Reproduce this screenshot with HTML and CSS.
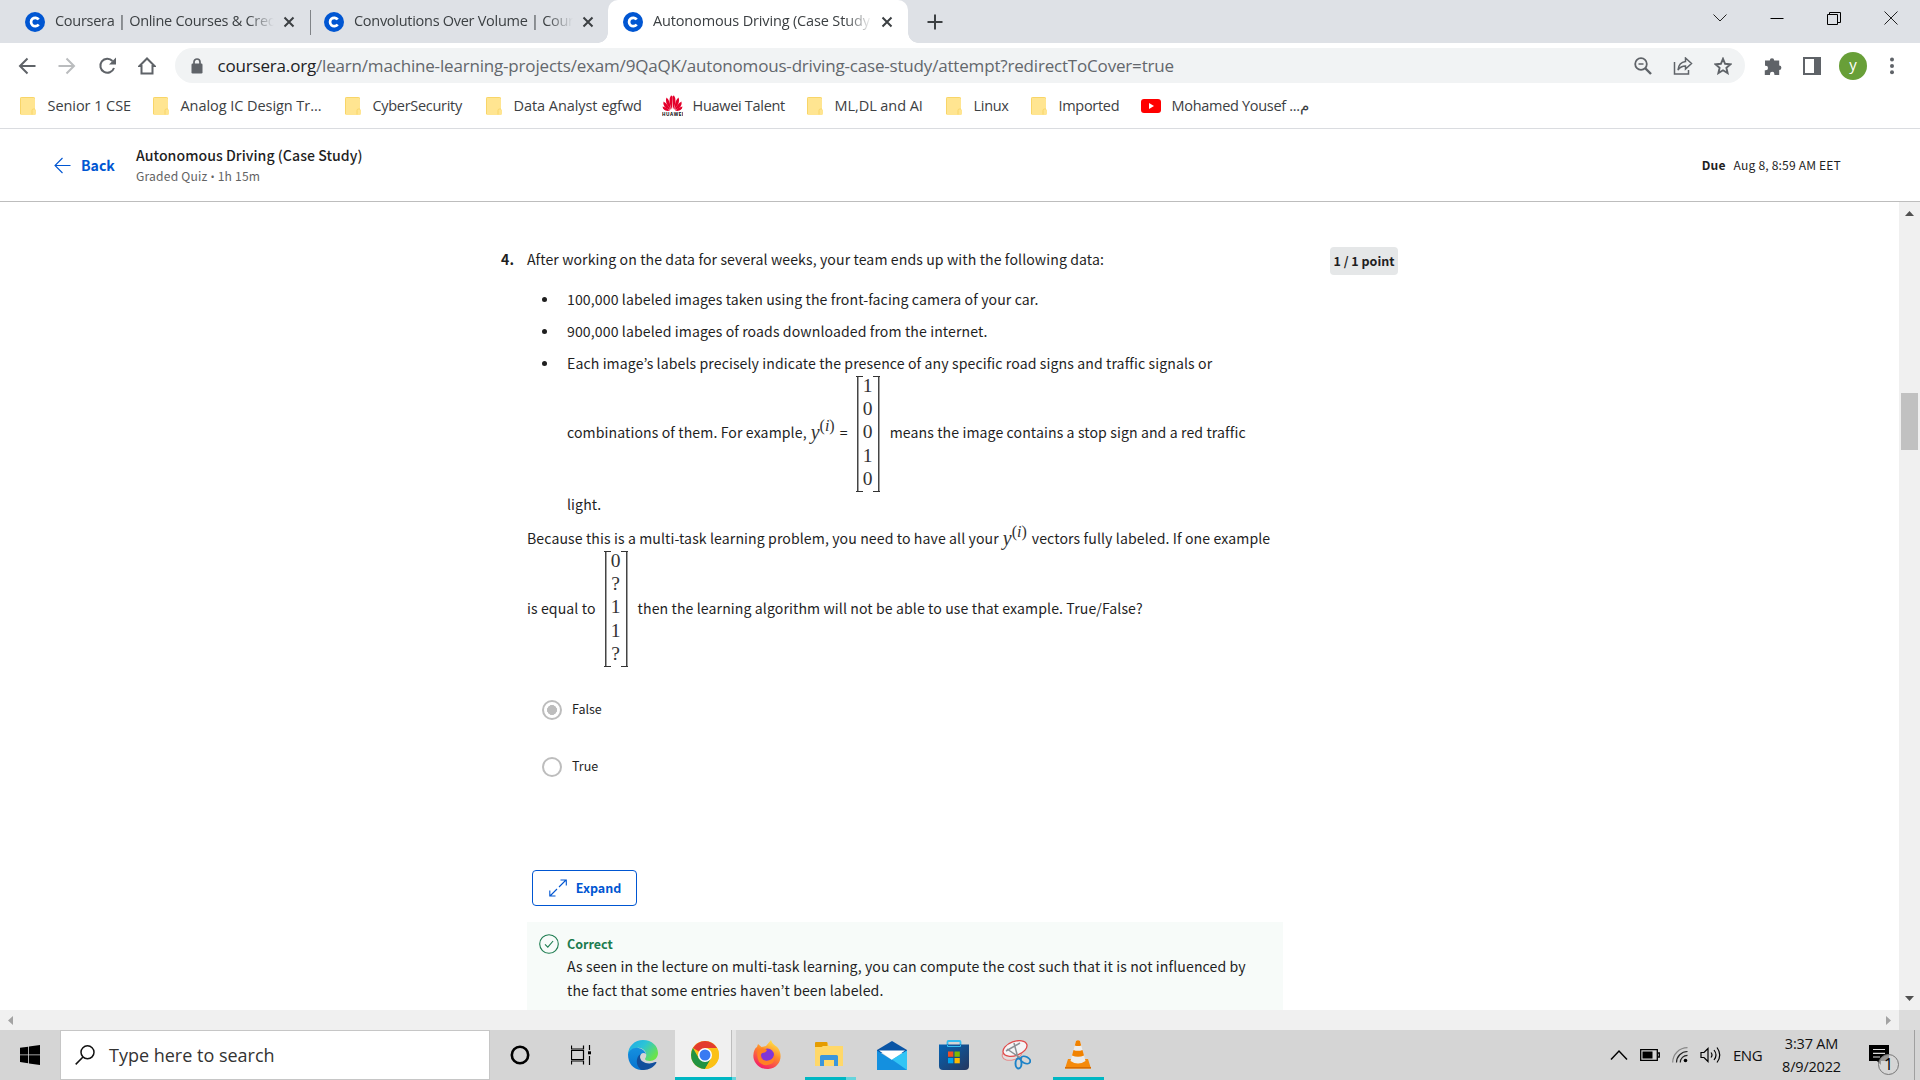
FILE: index.html
```html
<!DOCTYPE html>
<html lang="en">
<head>
<meta charset="utf-8">
<title>Autonomous Driving (Case Study)</title>
<link rel="stylesheet" href="styles.css">
</head>
<body>
<svg width="0" height="0" class="defs">
  <symbol id="c-logo" viewBox="0 0 20 20"><circle cx="10" cy="10" r="10" fill="#0056d2"/><path d="M13.7 7.6A4.2 4.2 0 1 0 13.7 12.4" fill="none" stroke="#fff" stroke-width="2.7"/></symbol>
  <symbol id="x" viewBox="0 0 12 12"><path d="M1.5 1.5l9 9M10.5 1.5l-9 9" stroke="#3c4043" stroke-width="2"/></symbol>
  <symbol id="folder" viewBox="0 0 16 18"><path d="M1.5 0h12Q15 0 15 1.500V12l1 1v3.500Q16 18 14.500 18h-13Q0 18 0 16.500v-15Q0 0 1.500 0z" fill="#ffe591"/><path d="M.5 17V1.500Q.5.5 1.500.5h12q1 0 1 1M12 17.500v-4q0-1.500 1.500-1.500h1.500" fill="none" stroke="#f8d568"/></symbol>
</svg>
<div class="tabs">
  <div class="tab"><svg class="fav"><use href="#c-logo"/></svg><span class="tab-title">Coursera | Online Courses &amp; Cred</span><svg class="tab-x"><use href="#x"/></svg></div>
  <div class="tab second"><svg class="fav"><use href="#c-logo"/></svg><span class="tab-title">Convolutions Over Volume | Cour</span><svg class="tab-x"><use href="#x"/></svg></div>
  <div class="tab active"><svg class="fav"><use href="#c-logo"/></svg><span class="tab-title t3">Autonomous Driving (Case Study</span><svg class="tab-x"><use href="#x"/></svg></div>
  <svg class="plus" width="16" height="16"><path d="M8 .5v15M.5 8h15" stroke="#3c4043" stroke-width="2"/></svg>
  <div class="window-buttons">
    <svg width="14" height="14"><path d="M.5 3.500L7 10l6.500-6.500" fill="none" stroke="#222"/></svg>
    <svg width="14" height="14"><path d="M.5 7.500h13" stroke="#000"/></svg>
    <svg width="14" height="14"><path d="M.5 3.500h10v10H.5zM2.500 3V1.500h11v10H11" fill="none" stroke="#000"/></svg>
    <svg width="14" height="14"><path d="M.5.5l13 13M13.500.5l-13 13" stroke="#222"/></svg>
  </div>
</div>
<div class="toolbar">
  <div class="nav">
    <svg width="18" height="18"><path d="M17.500 9H2M9.500 1.500L2 9l7.500 7.500" fill="none" stroke="#5f6368" stroke-width="2"/></svg>
    <svg width="18" height="18"><path d="M.5 9H16M8.500 1.500L16 9l-7.500 7.500" fill="none" stroke="#babcbe" stroke-width="2"/></svg>
    <svg width="18" height="18"><path d="M16 11A7 7 0 1 1 14.500 4" fill="none" stroke="#5f6368" stroke-width="2"/><path d="M18 .5v7h-7z" fill="#5f6368"/></svg>
    <svg width="18" height="18"><path d="M3.500 16.500V9H1.500L9 1.500 16.500 9H14.500v7.500z" fill="none" stroke="#5f6368" stroke-width="2"/></svg>
  </div>
  <div class="omnibox">
    <svg width="12" height="16"><path d="M3 7V4a3 3 0 0 1 6 0v3" fill="none" stroke="#5f6368" stroke-width="1.700"/><rect x=".5" y="5.500" width="11" height="10" rx="1.200" fill="#5f6368"/></svg>
    <div class="url"><b>coursera.org</b>/learn/machine-learning-projects/exam/9QaQK/autonomous-driving-case-study/attempt?redirectToCover=true</div>
    <div class="omni-icons">
      <svg width="18" height="18"><circle cx="7" cy="7" r="5.800" fill="none" stroke="#5f6368" stroke-width="1.800"/><path d="M11 11l6 6" stroke="#5f6368" stroke-width="2.400"/><path d="M4.500 7h5" stroke="#5f6368" stroke-width="1.500"/></svg>
      <svg width="20" height="18"><path d="M1.500 5v12h14v-4" fill="none" stroke="#5f6368" stroke-width="1.500"/><path d="M12.500 1l6 5.500-6 5.500V9C9 9 7 10 5 13c.5-5 3.500-8 7.500-8.500z" fill="none" stroke="#5f6368" stroke-width="1.500"/></svg>
      <svg width="18" height="18"><path d="M9 1.800l2.100 5 5.400.5-4.100 3.500 1.200 5.300L9 13.300l-4.600 2.800 1.200-5.300L1.500 7.300l5.400-.5z" fill="none" stroke="#5f6368" stroke-width="1.900"/></svg>
    </div>
  </div>
  <div class="ext">
    <svg width="18" height="18"><path d="M1 3.500h4.800a2.200 2.200 0 0 1 4.400 0h5v5a2.200 2.200 0 0 1 0 4.400V18h-4.800v-1a2.200 2.200 0 0 0-4.400 0v1H.8v-4.800h1a2.200 2.200 0 0 0 0-4.400H1z" fill="#5f6368"/></svg>
    <svg width="18" height="18"><path d="M1 1h16v16H1z" fill="none" stroke="#5f6368" stroke-width="2"/><path d="M11 1h6v16h-6z" fill="#5f6368"/></svg>
    <div class="avatar">y</div>
    <svg width="18" height="18"><g fill="#5f6368"><circle cx="9" cy="2.500" r="2"/><circle cx="9" cy="9" r="2"/><circle cx="9" cy="15.200" r="2"/></g></svg>
  </div>
</div>
<div class="bookmarks">
  <div class="bm wide b1"><svg><use href="#folder"/></svg><span>Senior 1 CSE</span></div>
  <div class="bm wide b2"><svg><use href="#folder"/></svg><span>Analog IC Design Tr...</span></div>
  <div class="bm b3"><svg><use href="#folder"/></svg><span>CyberSecurity</span></div>
  <div class="bm wide b4"><svg><use href="#folder"/></svg><span>Data Analyst egfwd</span></div>
  <div class="bm b5"><svg class="huawei" viewBox="0 0 21 21"><g fill="#e4002b"><path d="M10 14.500Q5.500 5 9 .5q1.800 0 1.500 3z"/><path d="M11 14.500Q15.500 5 12 .5q-1.800 0-1.500 3z"/><path d="M9 14.500Q2 8 4.500 2.500 8 5 9 14.500z"/><path d="M12 14.500q7-6.500 4.500-12Q13 5 12 14.500z"/><path d="M8.500 15Q0 12.500 1.500 6.500 6 9 8.500 15z"/><path d="M12.500 15Q21 12.500 19.500 6.500 15 9 12.500 15z"/><path d="M8 15.600Q1.500 17 .5 11.500q4 .5 7.500 4.100z"/><path d="M13 15.600q6.500 1.400 7.500-4.100-4 .5-7.500 4.100z"/></g><text x="0" y="20.800" font-size="4.600" textLength="21" font-weight="bold">HUAWEI</text></svg><span>Huawei Talent</span></div>
  <div class="bm wide b6"><svg><use href="#folder"/></svg><span>ML,DL and AI</span></div>
  <div class="bm b7"><svg><use href="#folder"/></svg><span>Linux</span></div>
  <div class="bm b8"><svg><use href="#folder"/></svg><span>Imported</span></div>
  <div class="bm b9"><svg class="yt" viewBox="0 0 20 14"><rect width="20" height="14" rx="3" fill="#f00"/><path d="M8 4l5 3-5 3z" fill="#fff"/></svg><span>Mohamed Yousef ...م</span></div>
</div>
<header class="quiz-head">
  <svg width="17" height="17"><path d="M16.500 8.500H1M8.500 1L1 8.500 8.500 16" fill="none" stroke="#0056d2" stroke-width="1.100"/></svg>
  <a class="back">Back</a>
  <div class="heading"><h1>Autonomous Driving (Case Study)</h1><p>Graded Quiz <span class="dot">•</span> 1h 15m</p></div>
  <div class="due"><b>Due</b><span>Aug 8, 8:59 AM EET</span></div>
</header>
<div class="viewport">
  <main class="question">
    <div class="num">4.</div>
    <div class="body">
      <p class="line intro">After working on the data for several weeks, your team ends up with the following data:</p>
      <ul>
        <li>100,000 labeled images taken using the front-facing camera of your car.</li>
        <li>900,000 labeled images of roads downloaded from the internet.</li>
        <li>Each image’s labels precisely indicate the presence of any specific road signs and traffic signals or
          <div class="mathline"><span class="m1">combinations of them. For example,</span><span class="y">y<sup>(<i>i</i>)</sup></span><span class="eq">=</span><span class="matrix"><i>1</i><i>0</i><i>0</i><i>1</i><i>0</i></span><span class="m2">means the image contains a stop sign and a red traffic</span></div>
          <div>light.</div></li>
      </ul>
      <div class="because"><span class="m3">Because this is a multi-task learning problem, you need to have all your</span><span class="y">y<sup>(<i>i</i>)</sup></span><span class="m4">vectors fully labeled. If one example</span></div>
      <div class="mathline second-math"><span class="m5">is equal to</span><span class="matrix"><i>0</i><i>?</i><i>1</i><i>1</i><i>?</i></span><span class="m6">then the learning algorithm will not be able to use that example. True/False?</span></div>
      <div class="option"><span class="radio on"></span><span class="label">False</span></div>
      <div class="option"><span class="radio"></span><span class="label">True</span></div>
      <button class="expand"><svg width="18" height="18"><path d="M10 8L17 1M11.500 1H17.300V6.500M8 10L1 17M6.500 17H.8v-5.500" fill="none" stroke="#0056d2" stroke-width="1.100"/></svg><span class="label">Expand</span></button>
      <div class="feedback">
        <svg width="20" height="20"><circle cx="10" cy="10" r="9.300" fill="none" stroke="#1d7c50" stroke-width="1.100"/><path d="M6 10.300l2.800 2.800 5.300-6.100" fill="none" stroke="#1d7c50" stroke-width="1.100"/></svg>
        <div><h2>Correct</h2><p>As seen in the lecture on multi-task learning, you can compute the cost such that it is not influenced by<br>the fact that some entries haven’t been labeled.</p></div>
      </div>
    </div>
    <div class="points">1 / 1 point</div>
  </main>
  <div class="vbar"><svg width="9" height="5"><path d="M0 5L4.500 0 9 5z" fill="#505050"/></svg><span class="thumb"></span><svg class="down" width="9" height="5"><path d="M0 0h9L4.500 5z" fill="#505050"/></svg></div>
</div>
<div class="hbar"><svg width="5" height="9"><path d="M5 0v9L0 4.500z" fill="#a3a3a3"/></svg><svg class="right" width="5" height="9"><path d="M0 0v9l5-4.500z" fill="#a3a3a3"/></svg><span class="corner"></span></div>
<footer class="taskbar">
  <div class="start"><svg width="20" height="20"><path d="M0 2.800l8.200-1.100v7.800H0zM9 1.500L20 0v9.500H9zM0 10.300h8.200v7.900L0 17zM9 10.300h11V20L9 18.400z"/></svg></div>
  <div class="search"><svg width="20" height="20"><circle cx="12.500" cy="7.300" r="6.500" fill="none" stroke="#111" stroke-width="1.500"/><path d="M8 12L.7 19.400" stroke="#111" stroke-width="1.500"/></svg>Type here to search</div>
  <div class="cell"><svg width="20" height="20"><circle cx="10" cy="10" r="8.200" fill="none" stroke="#000" stroke-width="2.600"/></svg></div>
  <div class="cell"><svg width="20" height="20"><path d="M.5.500v3.500h12V.5M.5 5.500h12v9H.5zM.5 19.500V16h12v3.500M18.500 0v5M18.500 11v9" fill="none" stroke="#000" stroke-width="1.200"/><path d="M17 6.300h3v3h-3z"/></svg></div>
  <div class="cell"><svg width="32" height="32" viewBox="0 0 32 32">
    <defs><linearGradient id="e1" x1="0" y1="0" x2="1" y2=".6"><stop offset="0" stop-color="#1fa8e8"/><stop offset=".5" stop-color="#2cc4d6"/><stop offset="1" stop-color="#6be34a"/></linearGradient><linearGradient id="e2" x1="0" y1="0" x2="0" y2="1"><stop offset="0" stop-color="#1690df"/><stop offset="1" stop-color="#0674d0"/></linearGradient></defs>
    <path d="M1 16C1 7 8 1 16 1c9 0 15 6 15 13 0 5-4 8-8 8-3 0-5-1-5-2 0-.8 1.300-1.500 1.300-4C19 11 14 8 10 9 5 10 2 13 1 16z" fill="url(#e1)"/>
    <path d="M1 15.500C2 11 7 8 11.500 9c4 .8 6.500 3 7.500 6-2-2-6-1-6 3 0 7 6 11 12 8-3 4-8 5-11 4.900C6 30.500 1 24 1 15.500z" fill="url(#e2)"/>
    <path d="M13.500 15C9 18 8 26 14 30.800c7 1 12.500-2.300 15.300-6.800.5-1-.2-1.300-1-.9C21 26.500 13 23 13 18c0-1 .2-2 .5-3z" fill="#124f9c"/></svg></div>
  <div class="cell chrome"><svg width="28" height="28" viewBox="0 0 28 28"><circle cx="14" cy="14" r="14" fill="#fbc116"/><path d="M14 14L1.900 7A14 14 0 0 1 26.100 7z" fill="#e33b2e"/><path d="M1.900 7A14 14 0 0 0 14 28l6-10.500-6-3.500-6 3.500z" fill="#229342"/><path d="M14 7h12.100A14 14 0 0 1 14 28l6.100-10.500z" fill="#fbc116"/><circle cx="14" cy="14" r="7" fill="#fff"/><circle cx="14" cy="14" r="5.500" fill="#397af2"/></svg></div>
  <div class="cell"><svg width="30" height="30" viewBox="0 0 30 30">
    <defs><linearGradient id="f1" x1=".8" y1="0" x2=".3" y2="1"><stop offset="0" stop-color="#fff04a"/><stop offset=".45" stop-color="#ff8a2b"/><stop offset="1" stop-color="#f3196b"/></linearGradient></defs>
    <path d="M5 7l1-3 3.500 3L14 6l5-6c1 4 4 5 6 7l1 1c6 9 1 20-9.500 21C6 29.500.8 21 1.400 15 1.600 11 3 8 5 7z" fill="url(#f1)"/><circle cx="15.500" cy="15" r="6.500" fill="#8136d8"/><path d="M6 9q6-2 9 1-1 3-5 3-2 2-1 5 3 4 9 2 4-2 4-6 2 7-3 10-7 3-12-2Q4 16 6 9z" fill="#ff8124"/></svg></div>
  <div class="cell explorer"><svg width="28" height="26" viewBox="0 0 28 26"><path d="M0 3V1.500Q0 1 1 1h11l2 3H28v20H0z" fill="#ffd869"/><path d="M0 5V1q0-1 1-1h10.500q1 0 1 1v3H8L6.500 5z" fill="#e59c00"/><path d="M5 24v-9.500q0-1.500 1.500-1.500h15q1.500 0 1.500 1.500V24h-4v-6H9v6z" fill="#3b96dc"/></svg></div>
  <div class="cell"><svg width="30" height="29" viewBox="0 0 30 29"><path d="M0 9L15 0l15 9v3H0z" fill="#0a55a5"/><path d="M2 9.500h26L15 19z" fill="#fff"/><path d="M0 9.500L15 19l15-9.500V29H0z" fill="#1490df"/><path d="M30 9.500V29L15 18.500z" fill="#32c5f5"/></svg></div>
  <div class="cell"><svg width="30" height="30" viewBox="0 0 30 30"><defs><linearGradient id="s1" x1="0" y1="0" x2="1" y2="1"><stop offset="0" stop-color="#0464b5"/><stop offset="1" stop-color="#26365e"/></linearGradient></defs><path d="M8.500 7V2q0-1 1-1h11q1 0 1 1v5" fill="none" stroke="#34bdf0" stroke-width="1.800"/><path d="M0 4.500h30V26q0 4-4 4H4q-4 0-4-4z" fill="url(#s1)"/><path d="M8.500 5v1.500h13V5" fill="none" stroke="#34bdf0" stroke-width="1"/><path d="M9 11.500h5.300v5.300H9z" fill="#f25022"/><path d="M15.500 11.500h5.300v5.300h-5.300z" fill="#7fba00"/><path d="M9 18h5.300v5.300H9z" fill="#00a4ef"/><path d="M15.500 18h5.300v5.300h-5.300z" fill="#ffb900"/></svg></div>
  <div class="cell"><svg width="30" height="30" viewBox="0 0 30 30"><ellipse cx="11" cy="14" rx="10" ry="6" fill="#e3dede" stroke="#e58a8a" transform="rotate(-15 11 14)"/><ellipse cx="14" cy="8.500" rx="12.500" ry="7" fill="#f5f5f7" stroke="#e04a4a" stroke-width="1.300" transform="rotate(-20 14 8.500)"/><path d="M13 3l4 15M6 9l15 10M5 11l14-8" stroke="#8c9095" stroke-width="1.500"/><g fill="none" stroke="#1c82c8" stroke-width="1.900"><ellipse cx="17.500" cy="23.500" rx="3" ry="5"/><ellipse cx="24.500" cy="20" rx="5" ry="3.300" transform="rotate(25 24.500 20)"/></g></svg></div>
  <div class="cell vlc"><svg width="26" height="30" viewBox="0 0 26 30"><path d="M3 19h20l3 9.500H0z" fill="#f58a0b"/><path d="M11 1q2-1.500 4 0l5.500 20q-7.500 5-15 0z" fill="#ececec"/><path d="M11 1q2-1.500 4 0l1.200 4.500q-3.200 1.200-6.400 0zM8.500 10q4.500 1.700 9 0l1.500 5.500q-6 2.500-12 0z" fill="#f18200"/><path d="M0 27h26v1.500H0z" fill="#d76b00"/></svg></div>
  <div class="tray">
    <svg width="18" height="12"><path d="M1 10.500L9 2l8 8.500" fill="none" stroke="#000" stroke-width="1.500"/></svg>
    <svg width="20" height="12"><path d="M.7.700h16.600v10.600H.7zM18 4h1.300v4H18" fill="none" stroke="#000" stroke-width="1.300"/><path d="M2.500 2.500h10v7h-10z"/></svg>
    <svg width="16" height="16"><g fill="none" stroke-width="1.200"><path d="M.7 15.500A14.800 14.800 0 0 1 15.500.7" stroke="#888"/><path d="M4.500 15.500a11 11 0 0 1 11-11M8.300 15.500a7.200 7.200 0 0 1 7.200-7.200" stroke="#222"/></g><circle cx="13.500" cy="13.500" r="1.800"/></svg>
    <svg width="21" height="18"><path d="M1 6.500h3L8 2.500v13L4 11.500H1zM11 6.500q2 2.500 0 5M14 4q4 5 0 10M17 1.500q5.500 7.500 0 15" fill="none" stroke="#000" stroke-width="1.200"/></svg>
    <span class="lang">ENG</span>
    <div class="clock"><span>3:37 AM</span><span>8/9/2022</span></div>
    <div class="notice"><svg width="20" height="20"><path d="M0 0h20v16h-8v4l-4-4H0z"/><path d="M4 4.500h12M4 8.300h12M4 12h7" stroke="#ddd" stroke-width="1.200"/></svg><span class="count">1</span></div>
  </div>
</footer>
</body>
</html>
```
FILE: styles.css
```css
* { box-sizing: border-box; margin: 0; padding: 0; }
body {
  width: 1920px; height: 1080px; overflow: hidden; background: #fff;
  display: flex; flex-direction: column;
  font-family: "Open Sans", "Noto Sans", sans-serif; color: #3c4043; white-space: nowrap;
}
.defs { position: absolute; }
svg { flex: none; display: block; }

.tabs { height: 43px; flex: none; background: #dee1e6; display: flex; align-items: center; }
.tab { display: flex; align-items: center; width: 299px; height: 43px; padding-left: 15px; margin-left: 10px; position: relative; }
.tab + .tab { margin-left: 0; }
.tab.second::before { content: ""; position: absolute; left: 1px; top: 10px; width: 1px; height: 25px; background: #808387; }
.tab.active { background: #fff; border-radius: 10px 10px 0 0; width: 300px; }
.tab.active::before, .tab.active::after { content: ""; position: absolute; bottom: 0; width: 10px; height: 10px; }
.tab.active::before { left: -10px; background: radial-gradient(circle at 0 0, transparent 9.500px, #fff 10px); }
.tab.active::after { right: -10px; background: radial-gradient(circle at 100% 0, transparent 9.500px, #fff 10px); }
.fav { width: 20px; height: 20px; }
.tab-title { font-size: 14.500px; letter-spacing: -.28px; width: 219px; margin: -3px 9px 0 10px; overflow: hidden; mask-image: linear-gradient(90deg, #000 88%, transparent); }
.t3 { letter-spacing: -.15px; }
.tab-x { width: 12px; height: 12px; }
.plus { margin-left: 19px; }
.window-buttons { margin-left: auto; display: flex; gap: 43px; padding: 0 22px 7px 0; }

.toolbar { height: 45px; flex: none; display: flex; align-items: center; }
.nav { display: flex; gap: 22px; padding-left: 18px; width: 175px; }
.omnibox { width: 1570px; height: 35px; border-radius: 18px; background: #f1f3f4; display: flex; align-items: center; padding-left: 16px; }
.url { font-size: 17px; margin: -1px 0 0 14.500px; color: #63676c; letter-spacing: -.18px; }
.url b { font-weight: 400; color: #202124; }
.omni-icons { display: flex; gap: 21px; margin-left: auto; padding-right: 13px; }
.ext { display: flex; align-items: center; padding-left: 19px; gap: 21px; }
.avatar { width: 28px; height: 28px; border-radius: 50%; background: #689f38; color: #fff; font-size: 15px; line-height: 25px; text-align: center; margin: 0 -5px 0 -3px; }

.bookmarks { height: 41px; flex: none; border-bottom: 1px solid #dadce0; padding: 0 0 5px 20px; display: flex; align-items: center; font-size: 14.500px; letter-spacing: -.3px; }
.bm { display: flex; align-items: center; gap: 11.500px; }
.bm svg { width: 16px; height: 18px; }
.bm .huawei { width: 21px; height: 21px; margin-right: -2px; }
.bm .yt { width: 20px; height: 14px; margin-right: -1px; }
.wide { letter-spacing: -.06px; }
.b1 { width: 133px; } .b2 { width: 192px; } .b3 { width: 141px; } .b4 { width: 176px; }
.b5 { width: 145px; } .b6 { width: 139px; } .b7 { width: 85px; } .b8 { width: 110px; }

.quiz-head, .viewport { font-family: "Noto Sans CJK KR", sans-serif; color: #1f1f1f; }
.quiz-head { height: 73px; flex: none; border-bottom: 1px solid #bdbdbd; display: flex; align-items: center; padding: 0 79px 0 54px; }
.back { color: #0056d2; font-weight: 700; font-size: 14.100px; margin-left: 10px; width: 55px; }
.heading { padding-top: 2px; }
.heading h1 { font-weight: 500; font-size: 14.100px; line-height: 21px; letter-spacing: .04px; }
.heading p { font-size: 12.100px; line-height: 20px; color: #636363; letter-spacing: .2px; }
.dot { font-family: "Open Sans", sans-serif; font-size: 11px; }
.due { margin: -2px 0 0 auto; font-size: 12.100px; display: flex; gap: 8px; letter-spacing: .16px; }

.viewport { height: 808px; flex: none; display: flex; justify-content: space-between; overflow: hidden; font-size: 14.100px; line-height: 24px; letter-spacing: .1px; }
.question { display: flex; padding-top: 45px; padding-left: 501px; }
.num { width: 26px; font-weight: 700; }
.body { width: 756px; }
.intro { margin-bottom: 16px; }
ul { list-style: none; padding-left: 40px; }
li { position: relative; margin-bottom: 8px; }
li::before { content: ""; position: absolute; left: -25px; top: 10px; width: 5px; height: 5px; border-radius: 50%; background: #1f1f1f; }
.mathline { height: 116px; display: flex; align-items: center; margin-top: 1px; }
.mathline > span:not(.matrix) { margin-top: -5px; }
.mathline .y, .because .y { font-family: "Liberation Serif", serif; font-style: italic; font-size: 20px; letter-spacing: 0; width: 25px; margin-left: 4px; color: #333; }
.because .y { width: 29px; }
.y sup { font-style: normal; font-size: 16px; line-height: 0; vertical-align: 8px; }
.y sup i { font-style: italic; }
.eq { width: 9px; margin-left: 4px; }
.matrix { width: 24px; height: 116px; margin: 0 10px 0 7px; display: flex; flex-direction: column; align-items: center; font: 19.500px "Liberation Serif", serif; letter-spacing: 0; color: #333;
  background: linear-gradient(#333, #333) 0 0 / 7px 1px, linear-gradient(#333, #333) 100% 0 / 7px 1px, linear-gradient(#333, #333) 0 100% / 7px 1px, linear-gradient(#333, #333) 100% 100% / 7px 1px, linear-gradient(#444, #444) 1px 0 / 1.500px 100%, linear-gradient(#444, #444) 22px 0 / 1.500px 100%; background-repeat: no-repeat; }
.matrix i { font-style: normal; height: 23.200px; line-height: 19px; }
.because { height: 24px; display: flex; margin-top: 10px; }
.second-math { margin-bottom: 31px; }
.second-math .matrix { margin-left: 8px; }
.mathline.second-math > span:not(.matrix) { margin-top: -3px; }
.option { height: 24px; margin: 0 0 33px 15px; display: flex; align-items: center; font-size: 12.500px; letter-spacing: 0; }
.option .label { margin-top: -2px; }
.radio { width: 20px; height: 20px; border: 2px solid #bdbdbd; border-radius: 50%; margin-right: 10px; }
.radio.on { background: radial-gradient(circle, #bdbdbd 4.700px, transparent 5.200px); }
.expand { margin: 91px 0 16px 5px; width: 105px; height: 36px; border: 1px solid #0056d2; border-radius: 4px; background: #fff; color: #0056d2; font: 700 12.500px "Noto Sans CJK KR", sans-serif; display: flex; align-items: center; justify-content: center; gap: 9px; padding-left: 1px; }
.expand .label { margin-top: -1px; }
.feedback { background: #f7fbf9; height: 110px; padding: 10px 12px; display: flex; gap: 8px; }
.feedback svg { margin-top: 2px; }
.feedback h2 { color: #1d7c50; font-size: 12.500px; line-height: 24px; margin-bottom: -2px; letter-spacing: 0; }
.points { margin: 0 0 0 47px; width: 68px; height: 28px; border-radius: 4px; background: #e5e7e8; text-align: center; font-weight: 700; font-size: 12.500px; line-height: 28px; letter-spacing: 0; }
.vbar { width: 21px; background: #f0f0f0; display: flex; flex-direction: column; align-items: center; padding: 9px 0; }
.thumb { width: 17px; height: 57px; background: #c1c1c1; margin-top: 177px; }
.down { margin-top: auto; }
.hbar { height: 20px; flex: none; background: #f0f0f0; display: flex; align-items: center; padding-left: 8px; }
.right { margin-left: auto; margin-right: 8px; }
.corner { width: 21px; height: 20px; background: #dcdcdc; }

.taskbar { height: 50px; flex: none; background: #d5d5d5; display: flex; align-items: center; color: #111; }
.start { width: 60px; padding-left: 20px; }
.search { width: 430px; height: 50px; background: #fff; border: 1px solid #c6c6c6; display: flex; align-items: center; gap: 14px; padding-left: 14px; font-size: 18px; letter-spacing: 0; margin-right: -1px; color: #333; }
.cell { width: 62.100px; height: 50px; display: flex; align-items: center; justify-content: center; position: relative; }
.search + .cell { width: 61px; }
.chrome::before { content: ""; position: absolute; left: 1px; top: 0; bottom: 0; width: 61px; background: linear-gradient(90deg, #f0f0f0 56px, #bdbdbd 56px 57px, #e5e5e5 57px); }
.chrome svg { position: relative; }
.chrome::after, .explorer::after, .vlc::after { content: ""; position: absolute; bottom: 0; height: 3px; left: 1px; width: 61px; background: linear-gradient(90deg, #00b7c3 57px, #66d4dc 57px); }
.explorer::after { left: 7px; width: 51px; background: linear-gradient(90deg, #00b7c3 41px, #66d4dc 41px); }
.vlc::after { left: 6px; width: 51px; background: #00b7c3; }
.tray { margin-left: auto; display: flex; align-items: center; padding-right: 5px; height: 50px; }
.tray svg { margin-right: 12px; }
.lang { font-size: 15px; letter-spacing: -.5px; width: 48px; }
.clock { width: 61px; display: flex; flex-direction: column; align-items: center; font-size: 14.500px; letter-spacing: -.2px; line-height: 23px; }
.notice { position: relative; margin-left: 27px; width: 46px; height: 50px; border-right: 1px solid #a0a0a0; padding-top: 15px; }
.count { position: absolute; left: 9px; top: 24px; width: 21px; height: 21px; border: 1px solid #777; border-radius: 50%; background: rgba(213, 213, 213, .7); text-align: center; font-size: 16px; line-height: 19px; color: #000; }
```
